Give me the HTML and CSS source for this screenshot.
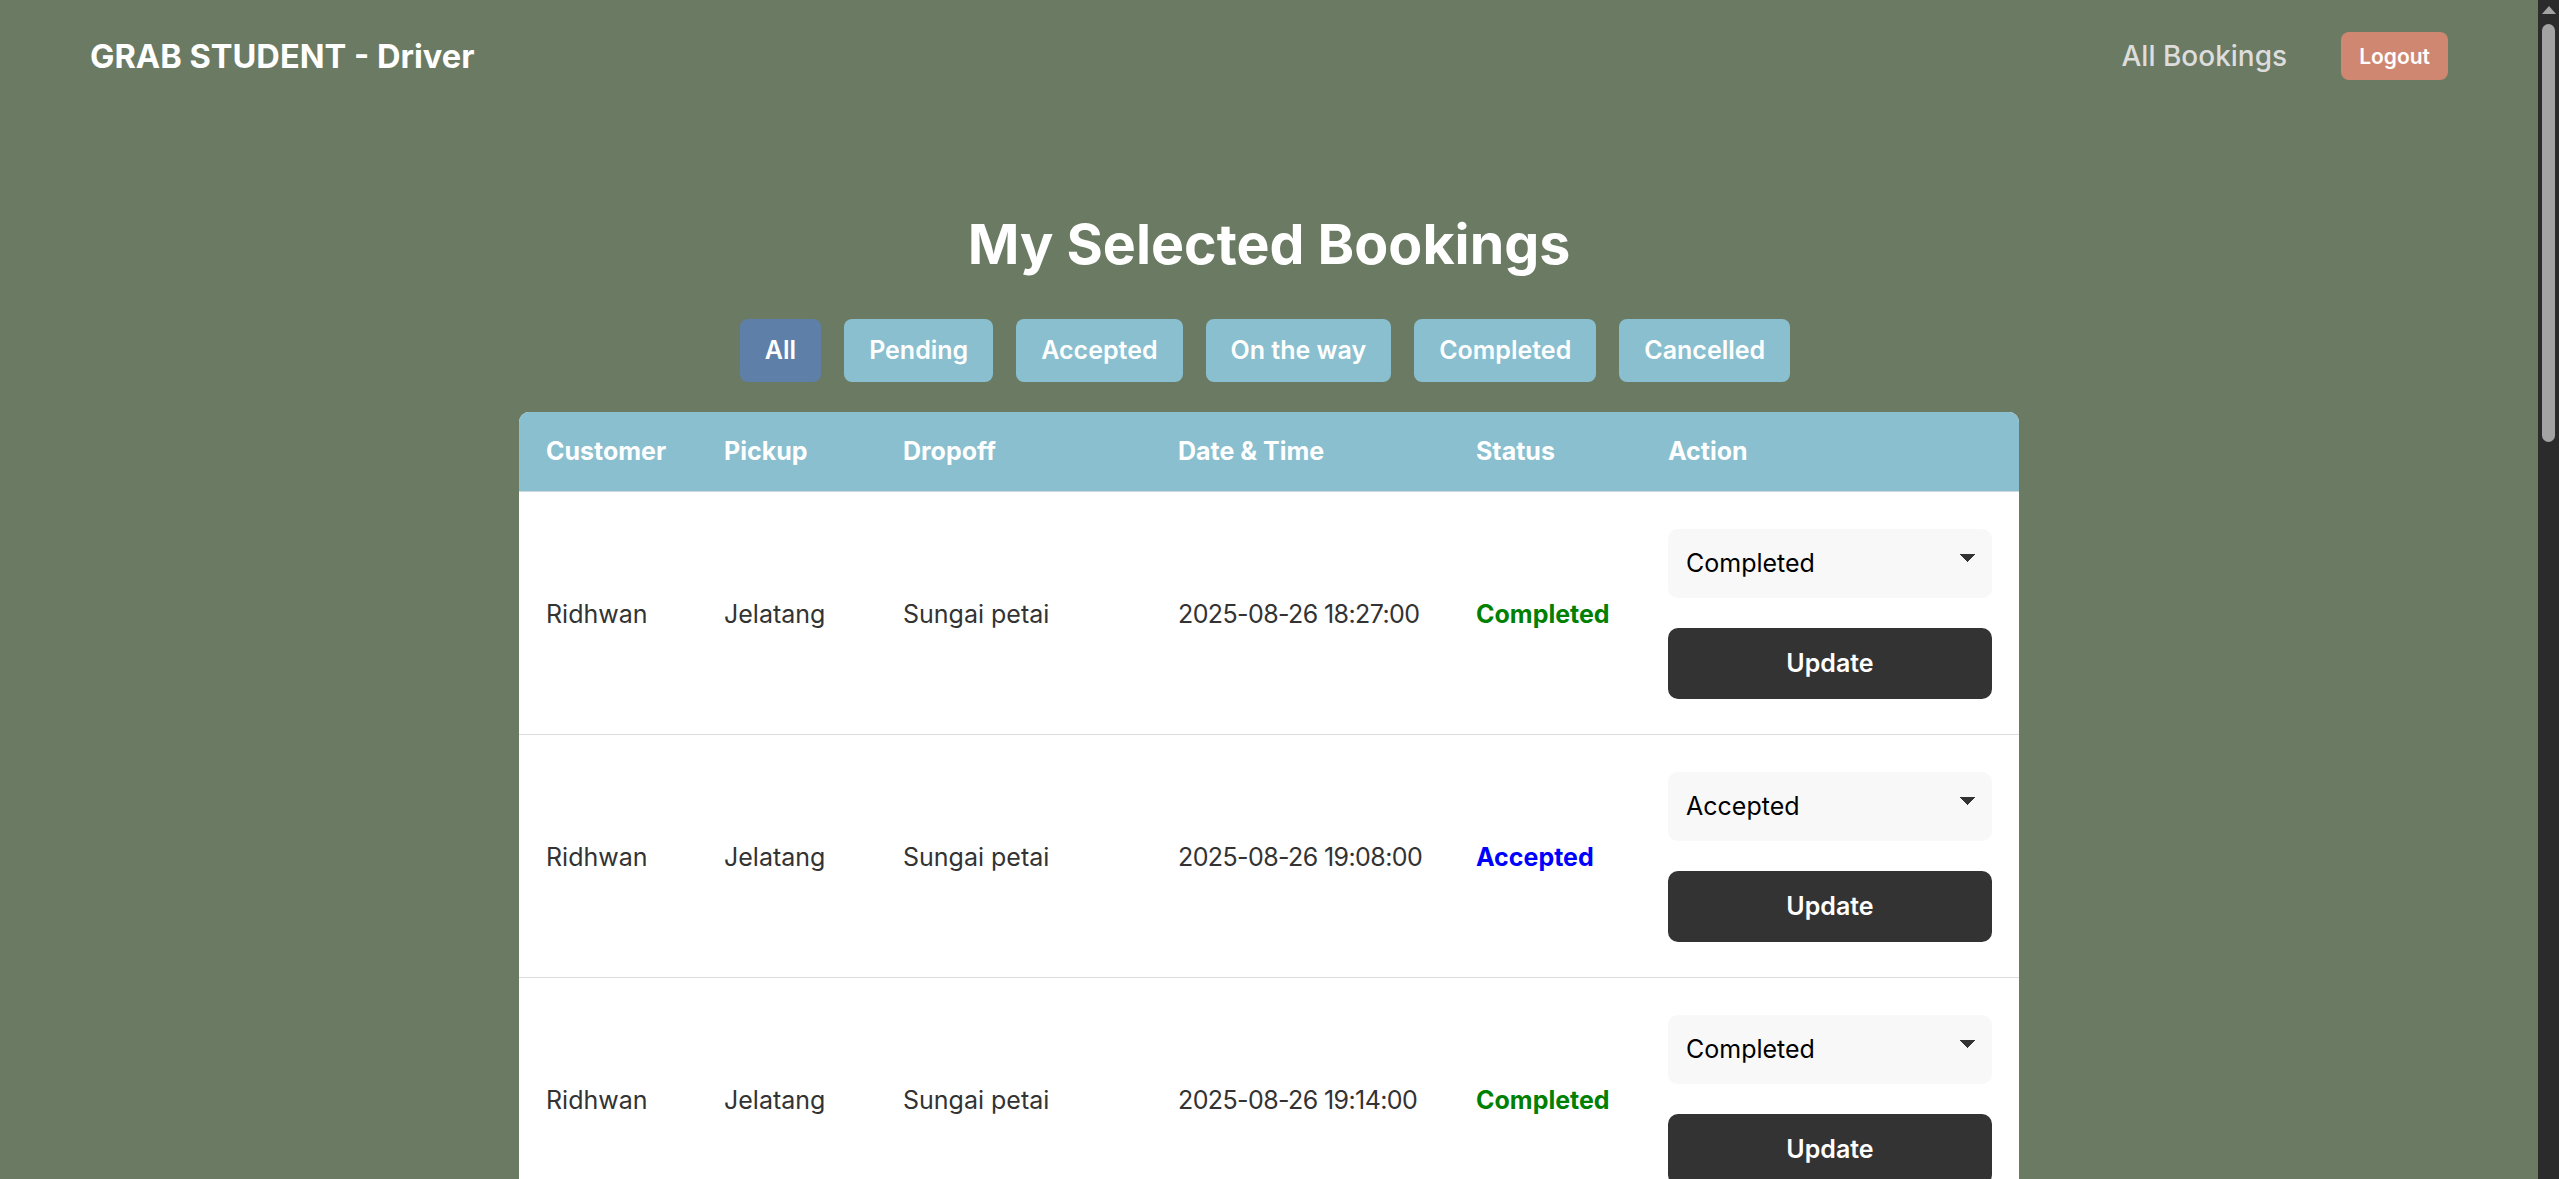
FILE: index.html
```html
<!DOCTYPE html>
<html lang="en">
<head>
<meta charset="utf-8">
<title>GRAB STUDENT - Driver</title>
<link rel="stylesheet" href="styles.css">
</head>
<body>
<header class="navbar">
  <div class="brand">GRAB STUDENT - Driver</div>
  <nav class="nav-links">
    <a class="nav-link" href="#">All Bookings</a>
    <button class="logout-btn" type="button">Logout</button>
  </nav>
</header>
<main class="container">
  <h1 class="page-title">My Selected Bookings</h1>
  <div class="filters">
    <button class="filter-btn active" type="button">All</button>
    <button class="filter-btn" type="button">Pending</button>
    <button class="filter-btn" type="button">Accepted</button>
    <button class="filter-btn" type="button">On the way</button>
    <button class="filter-btn" type="button">Completed</button>
    <button class="filter-btn" type="button">Cancelled</button>
  </div>
  <div class="table-wrap">
    <table class="bookings">
      <colgroup>
        <col class="col-customer"><col class="col-pickup"><col class="col-dropoff"><col class="col-date"><col class="col-status"><col class="col-action">
      </colgroup>
      <thead>
        <tr><th>Customer</th><th>Pickup</th><th>Dropoff</th><th>Date &amp; Time</th><th>Status</th><th>Action</th></tr>
      </thead>
      <tbody>
        <tr>
          <td>Ridhwan</td><td>Jelatang</td><td>Sungai petai</td><td class="date-cell">2025-08-26 18:27:00</td>
          <td><span class="status completed">Completed</span></td>
          <td><form class="action-form"><select class="status-select"><option>Pending</option><option>Accepted</option><option>On the way</option><option selected>Completed</option><option>Cancelled</option></select><button class="update-btn" type="button">Update</button></form></td>
        </tr>
        <tr>
          <td>Ridhwan</td><td>Jelatang</td><td>Sungai petai</td><td class="date-cell">2025-08-26 19:08:00</td>
          <td><span class="status accepted">Accepted</span></td>
          <td><form class="action-form"><select class="status-select"><option>Pending</option><option selected>Accepted</option><option>On the way</option><option>Completed</option><option>Cancelled</option></select><button class="update-btn" type="button">Update</button></form></td>
        </tr>
        <tr>
          <td>Ridhwan</td><td>Jelatang</td><td>Sungai petai</td><td class="date-cell">2025-08-26 19:14:00</td>
          <td><span class="status completed">Completed</span></td>
          <td><form class="action-form"><select class="status-select"><option>Pending</option><option>Accepted</option><option>On the way</option><option selected>Completed</option><option>Cancelled</option></select><button class="update-btn" type="button">Update</button></form></td>
        </tr>
        <tr>
          <td>Ridhwan</td><td>Jelatang</td><td>Sungai petai</td><td class="date-cell">2025-08-26 19:30:00</td>
          <td><span class="status completed">Completed</span></td>
          <td><form class="action-form"><select class="status-select"><option>Pending</option><option>Accepted</option><option>On the way</option><option selected>Completed</option><option>Cancelled</option></select><button class="update-btn" type="button">Update</button></form></td>
        </tr>
        <tr>
          <td>Ridhwan</td><td>Jelatang</td><td>Sungai petai</td><td class="date-cell">2025-08-27 08:15:00</td>
          <td><span class="status completed">Completed</span></td>
          <td><form class="action-form"><select class="status-select"><option>Pending</option><option>Accepted</option><option>On the way</option><option selected>Completed</option><option>Cancelled</option></select><button class="update-btn" type="button">Update</button></form></td>
        </tr>
        <tr>
          <td>Ridhwan</td><td>Jelatang</td><td>Sungai petai</td><td class="date-cell">2025-08-27 09:40:00</td>
          <td><span class="status accepted">Accepted</span></td>
          <td><form class="action-form"><select class="status-select"><option>Pending</option><option selected>Accepted</option><option>On the way</option><option>Completed</option><option>Cancelled</option></select><button class="update-btn" type="button">Update</button></form></td>
        </tr>
        <tr>
          <td>Ridhwan</td><td>Jelatang</td><td>Sungai petai</td><td class="date-cell">2025-08-27 12:05:00</td>
          <td><span class="status completed">Completed</span></td>
          <td><form class="action-form"><select class="status-select"><option>Pending</option><option>Accepted</option><option>On the way</option><option selected>Completed</option><option>Cancelled</option></select><button class="update-btn" type="button">Update</button></form></td>
        </tr>
        <tr>
          <td>Ridhwan</td><td>Jelatang</td><td>Sungai petai</td><td class="date-cell">2025-08-27 14:20:00</td>
          <td><span class="status completed">Completed</span></td>
          <td><form class="action-form"><select class="status-select"><option>Pending</option><option>Accepted</option><option>On the way</option><option selected>Completed</option><option>Cancelled</option></select><button class="update-btn" type="button">Update</button></form></td>
        </tr>
        <tr>
          <td>Ridhwan</td><td>Jelatang</td><td>Sungai petai</td><td class="date-cell">2025-08-28 10:00:00</td>
          <td><span class="status accepted">Accepted</span></td>
          <td><form class="action-form"><select class="status-select"><option>Pending</option><option selected>Accepted</option><option>On the way</option><option>Completed</option><option>Cancelled</option></select><button class="update-btn" type="button">Update</button></form></td>
        </tr>
        <tr>
          <td>Ridhwan</td><td>Jelatang</td><td>Sungai petai</td><td class="date-cell">2025-08-28 16:45:00</td>
          <td><span class="status completed">Completed</span></td>
          <td><form class="action-form"><select class="status-select"><option>Pending</option><option>Accepted</option><option>On the way</option><option selected>Completed</option><option>Cancelled</option></select><button class="update-btn" type="button">Update</button></form></td>
        </tr>
        <tr>
          <td>Ridhwan</td><td>Jelatang</td><td>Sungai petai</td><td class="date-cell">2025-08-29 11:30:00</td>
          <td><span class="status completed">Completed</span></td>
          <td><form class="action-form"><select class="status-select"><option>Pending</option><option>Accepted</option><option>On the way</option><option selected>Completed</option><option>Cancelled</option></select><button class="update-btn" type="button">Update</button></form></td>
        </tr>
      </tbody>
    </table>
  </div>
</main>
<div class="scrollbar" aria-hidden="true">
  <div class="scrollbar-arrow"></div>
  <div class="scrollbar-thumb"></div>
</div>
</body>
</html>
```
FILE: styles.css
```css
* { box-sizing: border-box; }
body {
  margin: 0 21px 0 0;
  background: #6b7a62;
  font-family: Inter, "Noto Sans", sans-serif;
  color: #333;
}
html { background: #6b7a62; }
.navbar {
  display: flex;
  justify-content: space-between;
  align-items: center;
  padding: 32px 90px;
}
.brand { color: #fff; font-size: 32.6px; font-weight: 700; }
.nav-links { display: flex; align-items: center; gap: 54px; }
.nav-link { color: #ddd; font-size: 28px; font-weight: 500; text-decoration: none; }
.logout-btn {
  height: 48px;
  padding: 0 18px;
  background: #cf8771;
  color: #fff;
  border: none;
  border-radius: 8px;
  font-family: inherit;
  font-size: 21px;
  font-weight: 600;
}
.page-title {
  margin: 99px 0 41px;
  text-align: center;
  color: #fff;
  font-size: 55.5px;
  font-weight: 700;
  line-height: 1.2;
}
.filters {
  display: flex;
  justify-content: center;
  gap: 23px;
  margin-bottom: 30px;
  padding-right: 8px;
}
.filter-btn {
  height: 63px;
  padding: 0 25px;
  border: none;
  border-radius: 8px;
  background: #89bfcf;
  color: #fff;
  font-family: inherit;
  font-size: 25px;
  font-weight: 600;
}
.filter-btn.active { background: #5e80a8; }
.table-wrap {
  width: 1500px;
  margin: 0 auto 35px;
  border-radius: 10px 10px 0 0;
  overflow: hidden;
  background: #fff;
}
.bookings { width: 100%; border-collapse: separate; border-spacing: 0; table-layout: fixed; }
.col-customer { width: 178px; }
.col-pickup { width: 179px; }
.col-dropoff { width: 275px; }
.col-date { width: 298px; }
.col-status { width: 192px; }
.col-action { width: 378px; }
.bookings th {
  height: 80px;
  padding: 0 27px;
  background: #89bfcf;
  color: #fff;
  text-align: left;
  font-size: 25px;
  font-weight: 700;
  white-space: nowrap;
  border-bottom: 1px solid #cfd8dc;
}
.bookings td {
  padding: 37px 27px 35px;
  font-size: 25px;
  color: #333;
  white-space: nowrap;
  border-bottom: 1px solid #ddd;
  vertical-align: middle;
}
.bookings td.date-cell { letter-spacing: -0.6px; }
.status { font-weight: 700; }
.status.completed { color: #008000; }
.status.accepted { color: #0000ff; }
.action-form { display: flex; flex-direction: column; gap: 30px; margin: 0; }
.status-select {
  appearance: none;
  width: 100%;
  height: 69px;
  padding: 0 18px;
  border: none;
  border-radius: 10px;
  background-color: #f8f8f8;
  background-image: linear-gradient(45deg, transparent 50%, #333 50%), linear-gradient(135deg, #333 50%, transparent 50%);
  background-position: right 24px top 25px, right 16px top 25px;
  background-size: 8px 8px;
  background-repeat: no-repeat;
  color: #000;
  font-family: inherit;
  font-size: 25px;
}
.update-btn {
  height: 71px;
  border: none;
  border-radius: 10px;
  background: #333;
  color: #fff;
  font-family: inherit;
  font-size: 25px;
  font-weight: 600;
}
.scrollbar {
  position: fixed;
  top: 0;
  right: 0;
  width: 21px;
  height: 100vh;
  background: #2b2b2b;
}
.scrollbar-arrow {
  position: absolute;
  top: 6px;
  left: 4px;
  width: 0;
  height: 0;
  border-left: 7px solid transparent;
  border-right: 7px solid transparent;
  border-bottom: 8px solid #a3a3a3;
}
.scrollbar-thumb {
  position: absolute;
  top: 24px;
  left: 4px;
  width: 13px;
  height: 418px;
  border-radius: 7px;
  background: #a3a3a3;
}
```
